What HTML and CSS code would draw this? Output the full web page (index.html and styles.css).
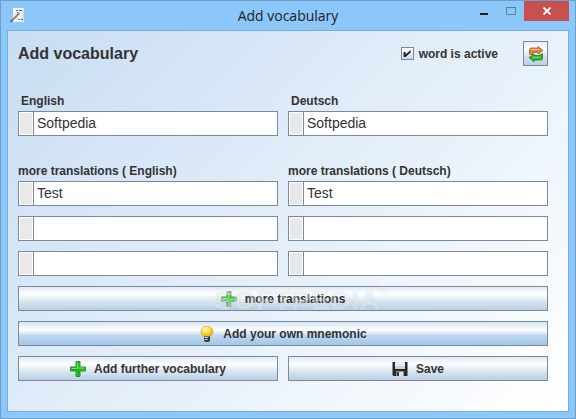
FILE: index.html
```html
<!DOCTYPE html>
<html lang="en">
<head>
<meta charset="utf-8">
<title>Add vocabulary</title>
<link rel="stylesheet" href="styles.css">
</head>
<body>
<div class="window">
  <header class="titlebar">
    <svg class="app-icon" width="16" height="16" viewBox="0 0 16 16" aria-hidden="true">
      <path d="M3 1h11v14H3z" fill="#f4f4f4"/>
      <path d="M12 2h2v13h-3z" fill="#dcdfe2"/>
      <path d="M6 3.500h2M9 3.500h3M7 5.500h1M8 12.500h2M11 12.500h2" stroke="#666"/>
      <path d="M1.500 14L9.500 6" stroke="#858585" stroke-width="1.800"/>
      <path d="M0 15l3-2" stroke="#666" stroke-width="1.500"/>
    </svg>
    <span class="caption">Add vocabulary</span>
    <div class="window-buttons">
      <button class="win-btn" type="button" aria-label="Minimize"><svg width="10" height="10" viewBox="0 0 10 10"><path d="M1 7h8v2H1z" fill="#1e1e1e"/></svg></button>
      <button class="win-btn" type="button" aria-label="Maximize"><svg width="10" height="10" viewBox="0 0 10 10"><path d="M.5 1.500h9v7h-9z" fill="none" stroke="#5d7f9d"/><path d="M0 1h10v1H0z" fill="#5d7f9d"/></svg></button>
      <button class="win-btn close" type="button" aria-label="Close"><svg width="10" height="8" viewBox="0 0 10 8"><path d="M1.500.5l7 7M8.500.5l-7 7" stroke="#fff" stroke-width="1.800"/></svg></button>
    </div>
  </header>

  <main class="content">
    <div class="heading">
      <h1>Add vocabulary</h1>
      <label class="active"><input type="checkbox" checked> word is active</label>
      <button class="push swap" type="button" aria-label="Swap languages">
        <svg width="16" height="16" viewBox="0 0 16 16" aria-hidden="true">
          <path d="M1.500 8.500V3.500Q1.500 2 3 2H10V.5L15 4.500 10 8V6.500H5V8.500z" fill="#e8803a" stroke="#a8602c" stroke-width=".8"/>
          <path d="M3 3.500h8" stroke="#ffc48c"/>
          <path d="M14.500 7.500v5q0 1.500-1.500 1.500H6v1.700L1 11.500 6 8v1.500h5z" fill="#35b52d" stroke="#22761d" stroke-width=".8"/>
          <path d="M4.500 11.300h8" stroke="#82df70"/>
        </svg>
      </button>
    </div>

    <div class="columns">
      <div class="group">
        <label class="name indent" for="en">English</label>
        <div class="field"><span class="grip"></span><input id="en" type="text" value="Softpedia"></div>
      </div>
      <div class="group">
        <label class="name indent" for="de">Deutsch</label>
        <div class="field"><span class="grip"></span><input id="de" type="text" value="Softpedia"></div>
      </div>
    </div>

    <div class="columns">
      <div class="group">
        <label class="name" for="en1">more translations ( English)</label>
        <div class="stack">
          <div class="field"><span class="grip"></span><input id="en1" type="text" value="Test"></div>
          <div class="field"><span class="grip"></span><input type="text" aria-label="English translation 2"></div>
          <div class="field"><span class="grip"></span><input type="text" aria-label="English translation 3"></div>
        </div>
      </div>
      <div class="group">
        <label class="name" for="de1">more translations ( Deutsch)</label>
        <div class="stack">
          <div class="field"><span class="grip"></span><input id="de1" type="text" value="Test"></div>
          <div class="field"><span class="grip"></span><input type="text" aria-label="Deutsch translation 2"></div>
          <div class="field"><span class="grip"></span><input type="text" aria-label="Deutsch translation 3"></div>
        </div>
      </div>
    </div>

    <div class="actions">
      <div class="marked wide">
        <button class="push" type="button">
          <svg width="16" height="16" viewBox="0 0 16 16" aria-hidden="true"><path d="M6 .5h4V6h5.500v4H10v5.500H6V10H.5V6H6z" fill="#48d048" stroke="#5b9c68"/><path d="M7.500 2v5.500H2M8.500 8.500H14" fill="none" stroke="#8bea83"/><path d="M2 8.500h6.500V14" fill="none" stroke="#29b72b"/></svg>
          more translations
        </button>
        <span class="watermark" aria-hidden="true">SOFTPEDIA<sup>®</sup></span>
      </div>
      <button class="push primary wide" type="button">
        <svg width="16" height="16" viewBox="0 0 16 16" aria-hidden="true">
          <defs><radialGradient id="glow" cx=".38" cy=".3" r=".7"><stop offset="0" stop-color="#fffde0"/><stop offset=".45" stop-color="#ffe340"/><stop offset="1" stop-color="#eea30c"/></radialGradient></defs>
          <path d="M8 .3c3.400 0 6 2.500 6 5.300 0 2.400-1.700 3.900-3.500 5.400h-5C3.700 9.500 2 8 2 5.600 2 2.800 4.600.3 8 .3z" fill="url(#glow)" stroke="#d99a16" stroke-width=".6"/>
          <path d="M5 10.500h6v4L9.500 16h-3L5 14.500z" fill="#30374f"/><path d="M5.500 11.500h3.500M5.500 13.500h3" stroke="#d5dae7"/>
        </svg>
        Add your own mnemonic
      </button>
      <button class="push" type="button">
        <svg width="16" height="16" viewBox="0 0 16 16" aria-hidden="true"><path d="M6 .5h4V6h5.500v4H10v5.500H6V10H.5V6H6z" fill="#20c814" stroke="#3c8646"/><path d="M7.500 2v5.500H2M9 7h5" fill="none" stroke="#76e570"/><path d="M2 8.500h6.500V14" fill="none" stroke="#0aa800"/></svg>
        Add further vocabulary
      </button>
      <button class="push" type="button">
        <svg width="16" height="16" viewBox="0 0 16 16" aria-hidden="true"><path d="M.5 1h15v14H1.500l-1-1z" fill="#25272b"/><path d="M3 1h10v7H3z" fill="#e9eef2"/><path d="M3 5h10v3H3z" fill="#cbd1d6"/><path d="M4 10h8v5H4z" fill="#8d8d8a"/><path d="M5 11h2v4H5z" fill="#33343a"/><path d="M7 11h4v4H7z" fill="#e4e1d4"/></svg>
        Save
      </button>
    </div>
  </main>
</div>
</body>
</html>
```

FILE: styles.css
```css
* {
  box-sizing: border-box;
}

body {
  margin: 0;
  font-family: "Liberation Sans", Arial, sans-serif;
  font-size: 12px;
  color: #333;
}

button,
input {
  margin: 0;
  font: inherit;
  color: inherit;
}

.window {
  display: flex;
  flex-direction: column;
  min-height: 100vh;
  padding: 0 6px 6px;
  border: 1px solid #6c9fcb;
  background: #8cc7fa;
}

.titlebar {
  display: grid;
  grid-template-columns: 1fr auto 1fr;
  height: 29px;
}

.app-icon {
  margin: 6px 0 0 3px;
}

.caption {
  font-family: "Open Sans", "Noto Sans", sans-serif;
  font-size: 14px;
  line-height: 29px;
  color: #222;
}

.window-buttons {
  display: flex;
  justify-content: flex-end;
}

.win-btn {
  display: flex;
  align-items: center;
  justify-content: center;
  width: 27px;
  height: 20px;
  padding: 0;
  border: 0;
  background: none;
}

.close {
  width: 45px;
  background: #c75050;
}

.content {
  display: flex;
  flex: 1;
  flex-direction: column;
  padding: 10px 20px 10px 10px;
  border: 1px solid #79acd8;
  background: linear-gradient(135deg, #c8ddf3, #fff);
}

.heading {
  display: flex;
  align-items: center;
  height: 25px;
}

h1 {
  margin: 0;
  font-size: 16px;
  line-height: 24px;
}

.active {
  display: flex;
  gap: 5px;
  align-items: center;
  margin-left: auto;
  font-weight: bold;
}

.active input {
  width: 13px;
  height: 13px;
  appearance: none;
  border: 1px solid #7a8a99;
  background: linear-gradient(#fff, #c9d9ea);
}

.active input:checked::before {
  content: "";
  display: block;
  width: 11px;
  height: 11px;
  background: #222;
  clip-path: polygon(18% 36%, 36% 36%, 36% 60%, 82% 18%, 82% 40%, 36% 82%, 18% 82%);
}

.columns,
.actions {
  display: grid;
  grid-template-columns: 1fr 1fr;
  gap: 10px;
}

.columns {
  margin-top: 28px;
}

.group,
.stack {
  display: flex;
  flex-direction: column;
}

.group {
  gap: 2px;
}

.stack {
  gap: 10px;
}

.name {
  font-weight: bold;
  line-height: 15px;
}

.indent {
  padding-left: 3px;
}

.field {
  display: flex;
  height: 25px;
  border: 1px solid #7a8a99;
  background: #fff;
}

.grip {
  width: 14px;
  border: 1px solid #fff;
  background: #e9e9e9;
}

.field input {
  flex: 1;
  min-width: 0;
  padding: 0 3px 1px;
  border: 0;
  border-left: 1px solid #7a8a99;
  background: none;
  font-size: 14px;
}

.actions {
  margin-top: 10px;
}

.wide {
  grid-column: 1 / -1;
}

.push {
  display: flex;
  gap: 8px;
  align-items: center;
  justify-content: center;
  width: 100%;
  height: 25px;
  padding: 0;
  border: 1px solid #7a8a99;
  background: linear-gradient(#e0e9f3, #fff 30%, #dce7f0 60%, #b8cfe5);
  font-weight: bold;
}

.primary {
  background: linear-gradient(#d5e5f6, #fff 35%, #bdd7f1 60%, #a3c5e8);
}

.swap {
  width: 25px;
  margin-left: 25px;
  background: linear-gradient(#e3ecf5, #fff 30%, #d7e4f0 60%, #b8cfe5);
}

.marked {
  position: relative;
}

.watermark {
  position: absolute;
  top: 0;
  left: 196px;
  font-size: 29px;
  font-weight: bold;
  line-height: 28px;
  color: rgb(255 255 255 / 35%);
  text-shadow: 0 1px 2px rgb(90 110 130 / 14%);
  white-space: nowrap;
  pointer-events: none;
}

.watermark sup {
  font-size: 9px;
  line-height: 9px;
  vertical-align: top;
}
```
